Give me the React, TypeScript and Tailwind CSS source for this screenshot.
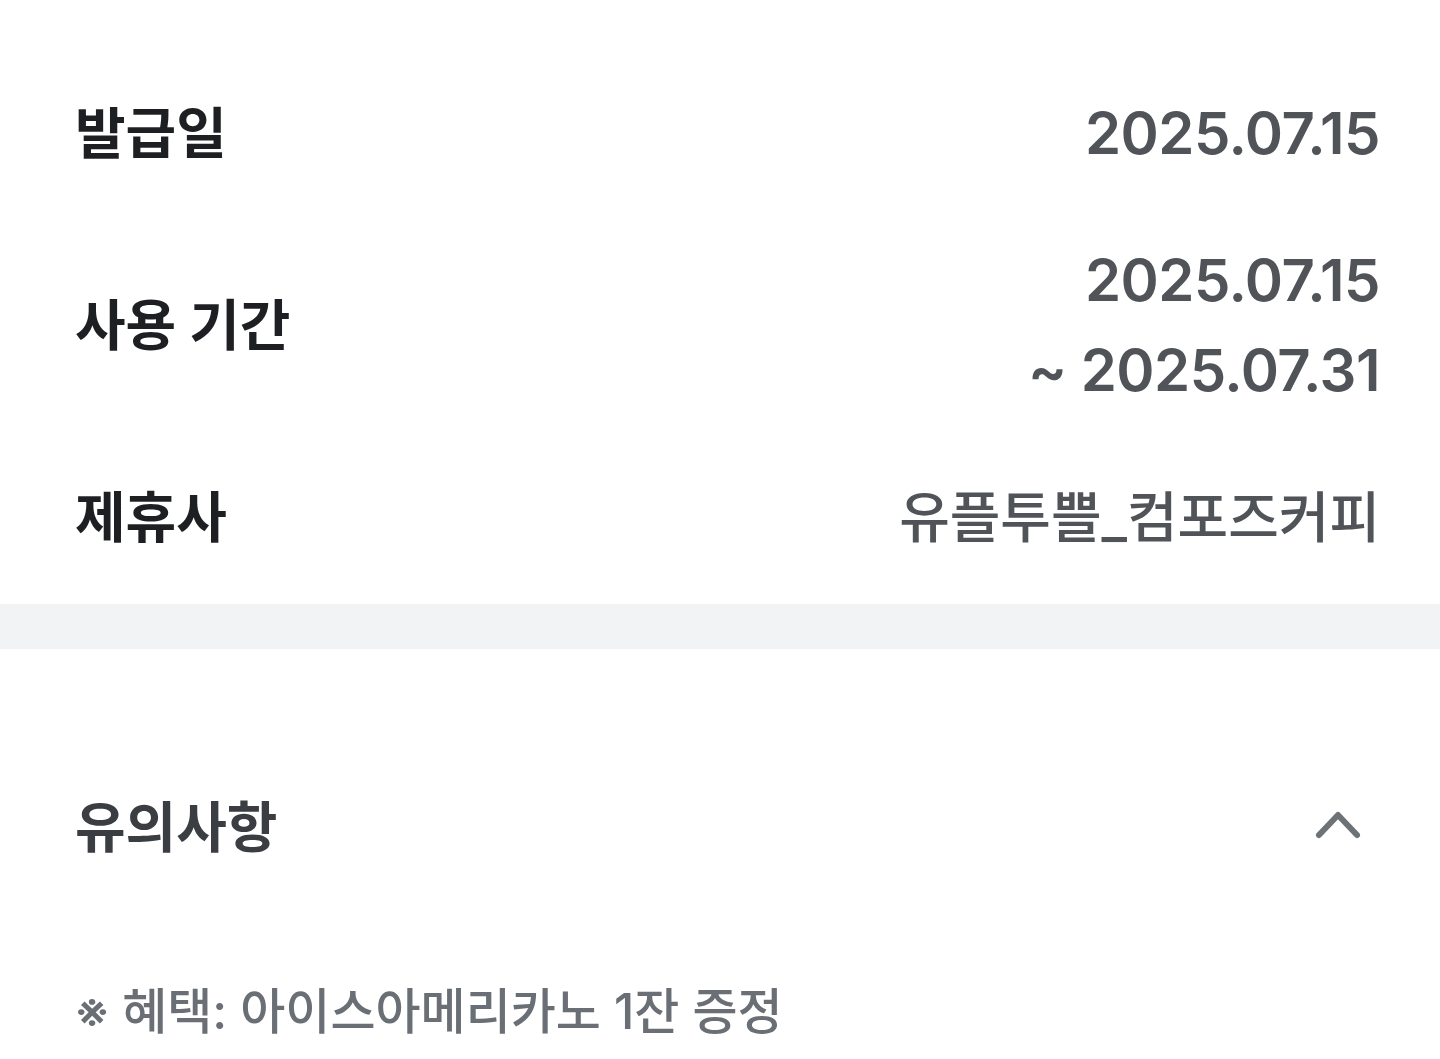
import React from 'react';

const FONT = "font-['Inter','Noto_Sans_CJK_KR',sans-serif]";

function Row({ label, children }: { label: string; children: React.ReactNode }) {
  return (
    <div className="flex items-center justify-between">
      <span className="text-[55px] font-bold text-[#1d1f22] leading-[90px]">{label}</span>
      <div className="flex flex-col items-end text-[58px] font-semibold text-[#505459] leading-[90px] tracking-[-0.5px]">
        {children}
      </div>
    </div>
  );
}

export default function App() {
  return (
    <div className={`w-[1440px] h-[1059px] overflow-hidden bg-white ${FONT}`}>
      {/* Coupon info */}
      <section className="pl-[75px] pr-[60px] pt-[88px] pb-[42px] flex flex-col gap-[57px]">
        <Row label="발급일">
          <span>2025.07.15</span>
        </Row>
        <Row label="사용 기간">
          <span>2025.07.15</span>
          <span>~ 2025.07.31</span>
        </Row>
        <Row label="제휴사">
          <span className="text-[55px] font-medium tracking-normal">유플투쁠_컴포즈커피</span>
        </Row>
      </section>

      <div className="h-[45px] bg-[#f2f3f5]" />

      {/* Notice */}
      <section className="pl-[75px] pr-[78px] pt-[133px]">
        <div className="flex items-center justify-between">
          <span className="text-[55px] font-semibold text-[#3a3d41] leading-[90px]">유의사항</span>
          <svg width="48" height="48" viewBox="0 0 48 48" fill="none" className="-mt-[6px]">
            <polyline
              points="5,35 24,15 43,35"
              stroke="#6d7277"
              strokeWidth="6"
              strokeLinecap="round"
              strokeLinejoin="round"
            />
          </svg>
        </div>
        <p className="mt-[110px] text-[49px] font-medium text-[#6a6f75] leading-[60px]">
          ※ 혜택: 아이스아메리카노 1잔 증정
        </p>
      </section>
    </div>
  );
}
